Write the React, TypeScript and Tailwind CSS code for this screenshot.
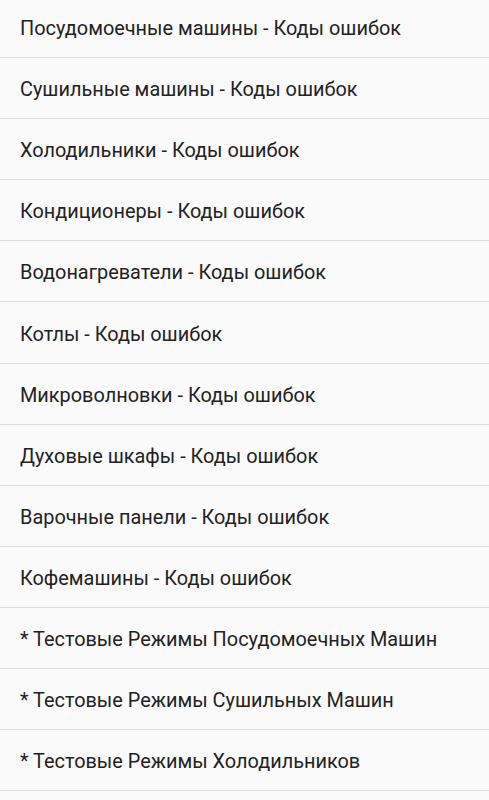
const items = [
  'Посудомоечные машины - Коды ошибок',
  'Сушильные машины - Коды ошибок',
  'Холодильники - Коды ошибок',
  'Кондиционеры - Коды ошибок',
  'Водонагреватели - Коды ошибок',
  'Котлы - Коды ошибок',
  'Микроволновки - Коды ошибок',
  'Духовые шкафы - Коды ошибок',
  'Варочные панели - Коды ошибок',
  'Кофемашины - Коды ошибок',
  '* Тестовые Режимы Посудомоечных Машин',
  '* Тестовые Режимы Сушильных Машин',
  '* Тестовые Режимы Холодильников',
];

export default function App() {
  return (
    <div className="h-[800px] overflow-hidden bg-[#fafafa] font-['Roboto',sans-serif]">
      <ul className="-mt-[3px]">
        {items.map((item) => (
          <li
            key={item}
            className="flex h-[61.1px] items-center border-b border-[#dcdcdc] px-5 pt-[4px] text-[19.9px] text-[#222]"
          >
            {item}
          </li>
        ))}
      </ul>
    </div>
  );
}
